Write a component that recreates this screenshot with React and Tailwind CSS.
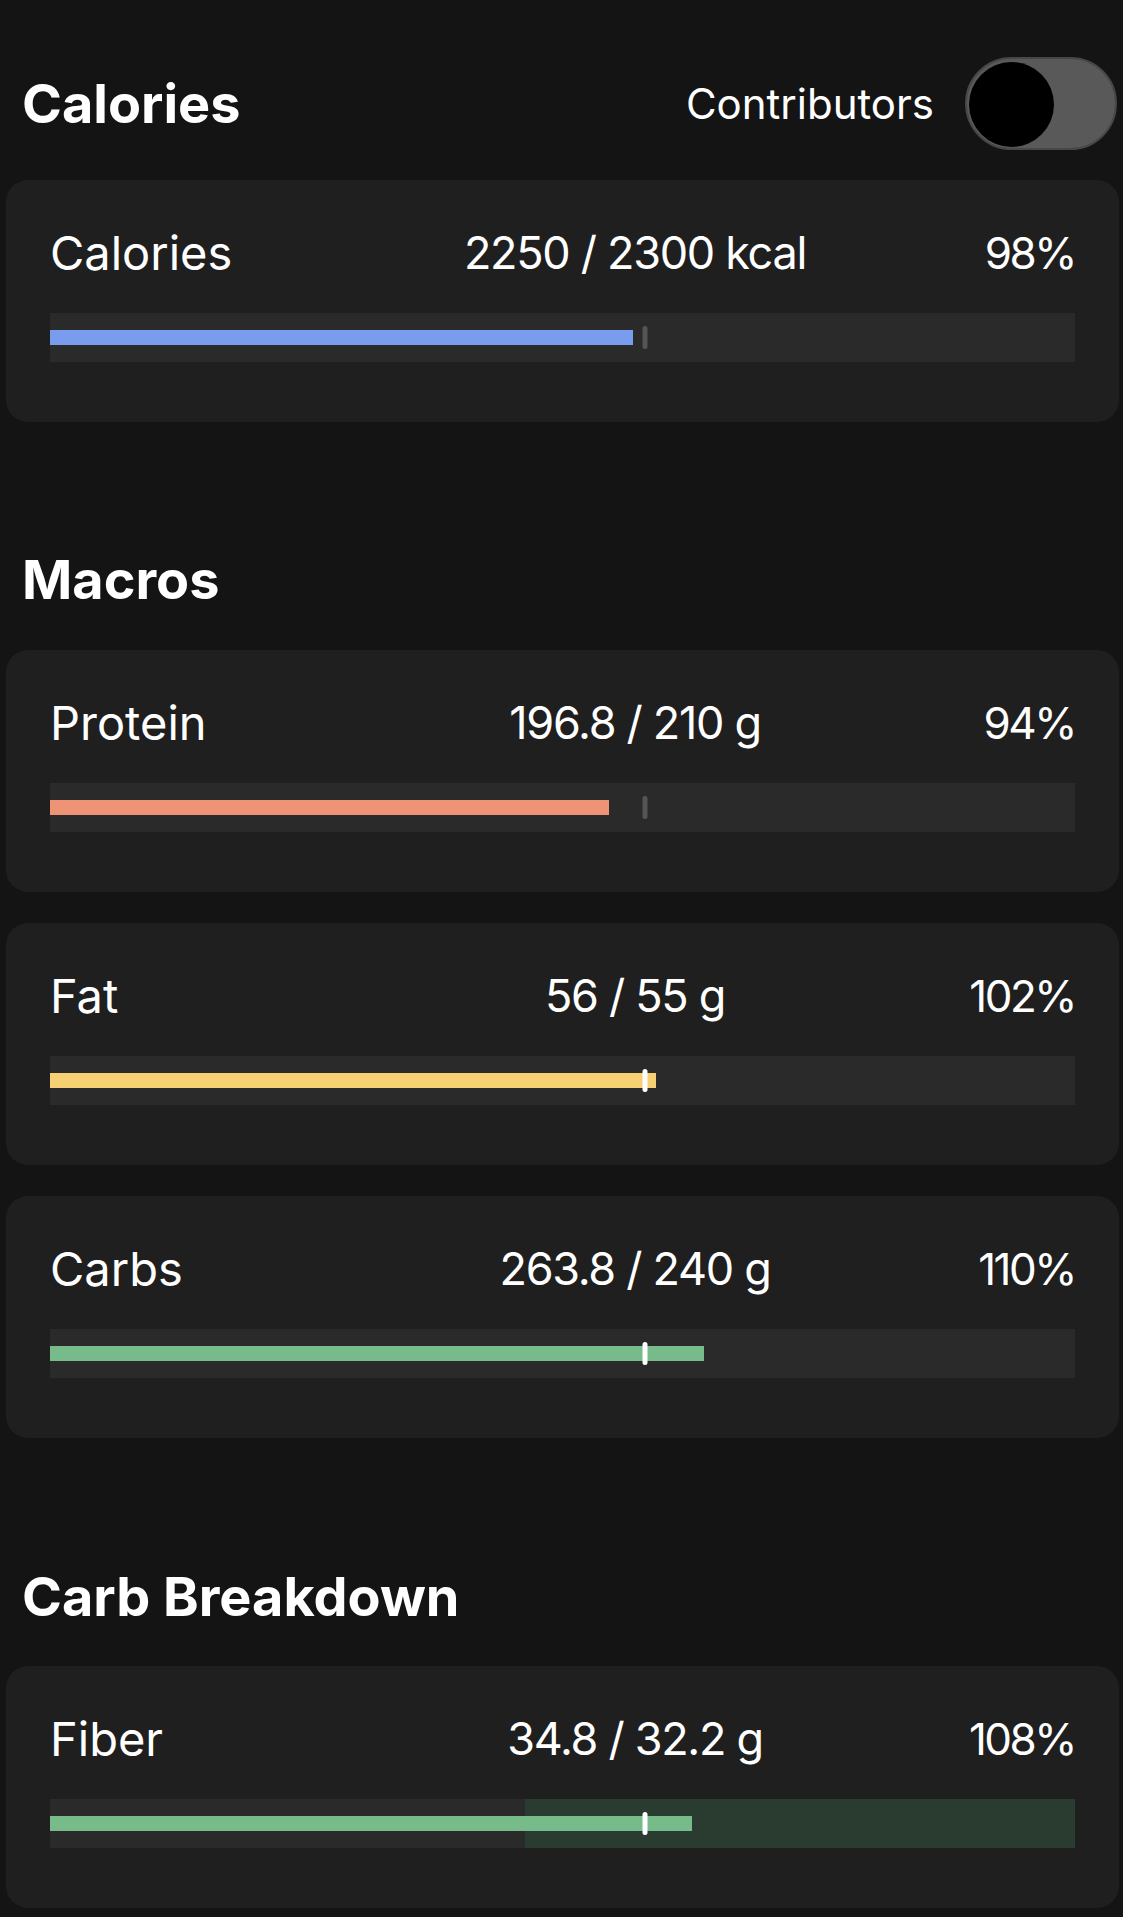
const rows = {
  calories: [{ label: "Calories", value: "2250 / 2300 kcal", pct: 98, color: "bg-[#7a9cee]" }],
  macros: [
    { label: "Protein", value: "196.8 / 210 g", pct: 94, color: "bg-[#ee9376]" },
    { label: "Fat", value: "56 / 55 g", pct: 102, color: "bg-[#f6d073]" },
    { label: "Carbs", value: "263.8 / 240 g", pct: 110, color: "bg-[#78bb8b]" },
  ],
  carbs: [{ label: "Fiber", value: "34.8 / 32.2 g", pct: 108, color: "bg-[#78bb8b]", range: true }],
}

// target marker sits at 58% of the track
const TARGET = 58

function Row({ label, value, pct, color, range }) {
  const over = pct >= 100
  return (
    <div className="ml-[6px] mr-[4px] rounded-[22px] bg-[#1f1f1f] pl-[44px] pr-[44px] pt-[46px] pb-[60px]">
      <div className="flex h-[54px] items-center leading-[54px] text-white">
        <div className="w-[275px] text-[47px]">{label}</div>
        <div className="flex-1 text-center text-[45px] tracking-[-1.3px]">{value}</div>
        <div className="w-[130px] text-right text-[44px] tracking-[-2.5px]">{pct}%</div>
      </div>
      <div className="relative mt-[33px] h-[49px] bg-[#2a2a2a]">
        {range && <div className="absolute inset-y-0 left-[46.3%] right-0 bg-[#2a3c2f]" />}
        <div
          className={`absolute left-0 top-[17px] h-[15px] ${color}`}
          style={{ width: `${(pct / 100) * TARGET}%` }}
        />
        <div
          className={`absolute top-[13px] h-[23px] w-[5px] -translate-x-1/2 rounded-full ${over ? "bg-white" : "bg-[#555555]"}`}
          style={{ left: `${TARGET}%` }}
        />
      </div>
    </div>
  )
}

export default function App() {
  return (
    <div
      className="min-h-screen w-[1123px] bg-[#141414] pt-[57px] pb-[9px] text-white"
      style={{ fontFamily: "Inter, 'Noto Sans', sans-serif" }}
    >
      <div className="flex h-[93px] items-center justify-between pl-[22px] pr-[6px]">
        <h2 className="text-[54px] font-bold leading-[60px]">Calories</h2>
        <div className="flex items-center gap-[31px]">
          <span className="text-[42px]">Contributors</span>
          <div className="relative h-[93px] w-[152px] rounded-full border-2 border-[#474747] bg-[#595959]">
            <div className="absolute left-[2px] top-[3px] h-[85px] w-[85px] rounded-full bg-black" />
          </div>
        </div>
      </div>
      <div className="mt-[30px]">
        {rows.calories.map((r) => <Row key={r.label} {...r} />)}
      </div>

      <h2 className="mt-[128px] pl-[22px] text-[54px] font-bold leading-[60px]">Macros</h2>
      <div className="mt-[40px] flex flex-col gap-[31px]">
        {rows.macros.map((r) => <Row key={r.label} {...r} />)}
      </div>

      <h2 className="mt-[129px] pl-[22px] text-[54px] font-bold leading-[60px]">Carb Breakdown</h2>
      <div className="mt-[39px]">
        {rows.carbs.map((r) => <Row key={r.label} {...r} />)}
      </div>
    </div>
  )
}
